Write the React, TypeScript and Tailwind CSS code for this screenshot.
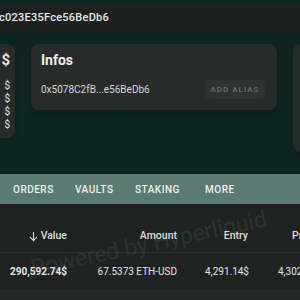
const font = { fontFamily: "Roboto, 'Liberation Sans', sans-serif" };

function TopBar() {
  return (
    <div className="pt-1">
      <div className="flex h-[29px] items-center bg-[#1e2020] text-[11px] font-medium tracking-[0.25px] text-[#e6e8e7]">
        <span className="-ml-px">c023E35Fce56BeDb6</span>
      </div>
    </div>
  );
}

function BalanceCard() {
  return (
    <div className="-ml-[105px] flex h-[94px] w-[120px] shrink-0 flex-col items-end rounded-lg bg-[#282b2a] pr-[5px] pt-[7px] text-[#e3e6e5] shadow-md">
      <span className="text-[15px] font-bold leading-[18px]">$</span>
      <div className="mt-[10px] flex flex-col items-end text-[10px] leading-[13px]">
        <span>$</span>
        <span>$</span>
        <span>$</span>
        <span>$</span>
      </div>
    </div>
  );
}

function InfosCard() {
  return (
    <div className="flex h-[66px] w-[246px] shrink-0 flex-col rounded-lg bg-[#282b2a] pl-[10px] pr-[12px] pt-[7px] shadow-md">
      <h2 className="text-[14px] font-bold leading-[18px] text-[#eef0ef]">Infos</h2>
      <div className="mt-[11px] flex items-center justify-between">
        <span className="text-[10px] text-[#d5d9d8]">0x5078C2fB...e56BeDb6</span>
        <button
          type="button"
          className="h-[19px] w-[60px] rounded bg-[#2e3231] text-[8px] font-medium tracking-[1px] text-[#6c7371]"
        >
          ADD ALIAS
        </button>
      </div>
    </div>
  );
}

function Tabs() {
  const tabs = [
    { label: "ORDERS", w: "w-[62px]" },
    { label: "VAULTS", w: "w-[60px]" },
    { label: "STAKING", w: "w-[70px]" },
    { label: "MORE", w: "w-[50px]" },
  ];
  return (
    <div className="relative">
      <div className="flex h-[30px] items-center bg-[#5a7a73] pl-[13px] text-[10px] font-medium tracking-[0.5px] text-[#eef2f1]">
        {tabs.map((t) => (
          <span key={t.label} className={t.w}>
            {t.label}
          </span>
        ))}
      </div>
      <div className="absolute -bottom-[2px] left-0 h-[2px] w-[3px] bg-white" />
    </div>
  );
}

function Table() {
  return (
    <div className="relative overflow-hidden bg-[#1f2221]">
      <div className="flex h-[48px] items-center pt-[16px] text-[10.5px] font-medium text-[#dadedd]">
        <div className="flex w-[67px] shrink-0 items-center justify-end gap-[2px]">
          <svg className="h-[11px] w-[11px]" viewBox="0 0 24 24" fill="none" stroke="currentColor" strokeWidth={2.4}>
            <path d="M12 3v18M5 14l7 7 7-7" strokeLinecap="round" strokeLinejoin="round" />
          </svg>
          Value
        </div>
        <div className="w-[110px] shrink-0 text-right">Amount</div>
        <div className="w-[71px] shrink-0 text-right">Entry</div>
        <div className="shrink-0 pl-[44px]">Price</div>
      </div>
      <div className="border-t border-[#2d3130]" />
      <div className="flex h-[36px] items-center text-[10px] text-[#e4e7e6]">
        <div className="w-[67px] shrink-0 text-right font-bold">290,592.74$</div>
        <div className="w-[110px] shrink-0 text-right">67.5373 ETH-USD</div>
        <div className="w-[72px] shrink-0 text-right">4,291.14$</div>
        <div className="shrink-0 whitespace-nowrap pl-[29px]">4,302.55$</div>
      </div>
      <div className="h-[14px] bg-[#232726]" />
      <div
        className="pointer-events-none absolute left-[34px] top-[52px] -rotate-[12deg] whitespace-nowrap text-[23px] leading-[26px] text-white/[0.07]"
        style={{ transformOrigin: "left bottom" }}
      >
        Powered by Hyperliquid
      </div>
    </div>
  );
}

export default function App() {
  return (
    <div className="h-[300px] w-[300px] overflow-hidden bg-[#0e2420]" style={font}>
      <TopBar />
      <div className="mt-[11px] flex items-start gap-4">
        <BalanceCard />
        <InfosCard />
        <div className="h-[108px] w-[120px] shrink-0 rounded-lg bg-[#282b2a] shadow-md" />
      </div>
      <div className="mt-[22px]">
        <Tabs />
      </div>
      <Table />
    </div>
  );
}
